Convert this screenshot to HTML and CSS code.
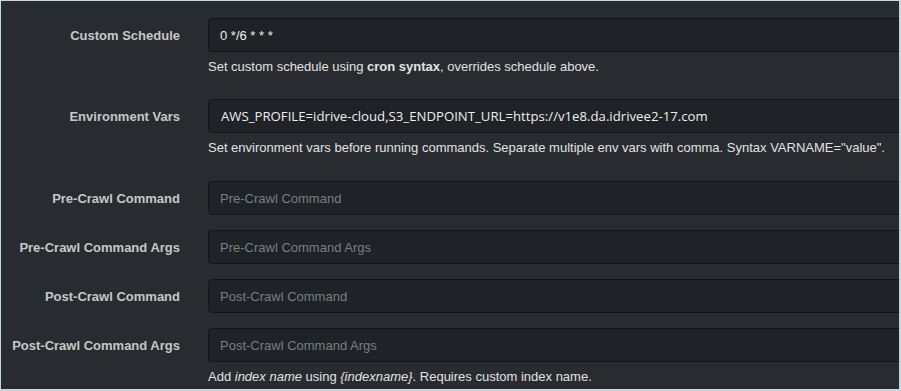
FILE: index.html
```html
<!DOCTYPE html>
<html>
<head>
<meta charset="utf-8">
<link rel="stylesheet" href="styles.css">
</head>
<body>
<div class="frame">
  <div class="form">
    <div class="field">
      <div class="label">Custom Schedule</div>
      <div class="input value">0 */6 * * *</div>
    </div>
    <div class="help">Set custom schedule using <b>cron syntax</b>, overrides schedule above.</div>

    <div class="field f-env">
      <div class="label">Environment Vars</div>
      <div class="input value env">AWS_PROFILE=idrive-cloud,S3_ENDPOINT_URL=https://v1e8.da.idrivee2-17.com</div>
    </div>
    <div class="help">Set environment vars before running commands. Separate multiple env vars with comma. Syntax VARNAME="value".</div>

    <div class="field f-pre">
      <div class="label">Pre-Crawl Command</div>
      <div class="input placeholder">Pre-Crawl Command</div>
    </div>
    <div class="field f-next">
      <div class="label">Pre-Crawl Command Args</div>
      <div class="input placeholder">Pre-Crawl Command Args</div>
    </div>
    <div class="field f-next">
      <div class="label">Post-Crawl Command</div>
      <div class="input placeholder">Post-Crawl Command</div>
    </div>
    <div class="field f-next">
      <div class="label">Post-Crawl Command Args</div>
      <div class="input placeholder">Post-Crawl Command Args</div>
    </div>
    <div class="help">Add <i>index name</i> using <i>{indexname}</i>. Requires custom index name.</div>
  </div>
</div>
</body>
</html>
```

FILE: styles.css
```css
* { box-sizing: border-box; }
html, body { margin: 0; padding: 0; background: #c9d6de; }
.frame {
  width: 901px;
  height: 391px;
  border: 1px solid #c9d6de;
  border-right-width: 2px;
  border-bottom-width: 2px;
  background: #282b30;
  overflow: hidden;
  font-family: "Liberation Sans", Arial, sans-serif;
  font-size: 13px;
}
.form {
  padding-top: 17px;
  width: 1200px;
}
.field {
  display: grid;
  grid-template-columns: 179px 720px;
  column-gap: 28px;
  align-items: center;
}
.f-env { margin-top: 23px; }
.f-pre { margin-top: 24px; }
.f-next { margin-top: 15px; }
.label {
  text-align: right;
  font-weight: bold;
  color: #c6c7c8;
}
.input {
  height: 34px;
  border: 1px solid #131518;
  border-radius: 4px;
  background: #1f2226;
  padding-left: 11px;
  display: flex;
  align-items: center;
  white-space: nowrap;
}
.value { color: #eeeeee; }
.env {
  font-family: "Open Sans", sans-serif;
  font-size: 13.2px;
  padding-left: 12px;
}
.placeholder { color: #7b7e82; }
.help {
  margin-left: 207px;
  margin-top: 6px;
  line-height: 18px;
  color: #e2e2e2;
  white-space: nowrap;
}
```
